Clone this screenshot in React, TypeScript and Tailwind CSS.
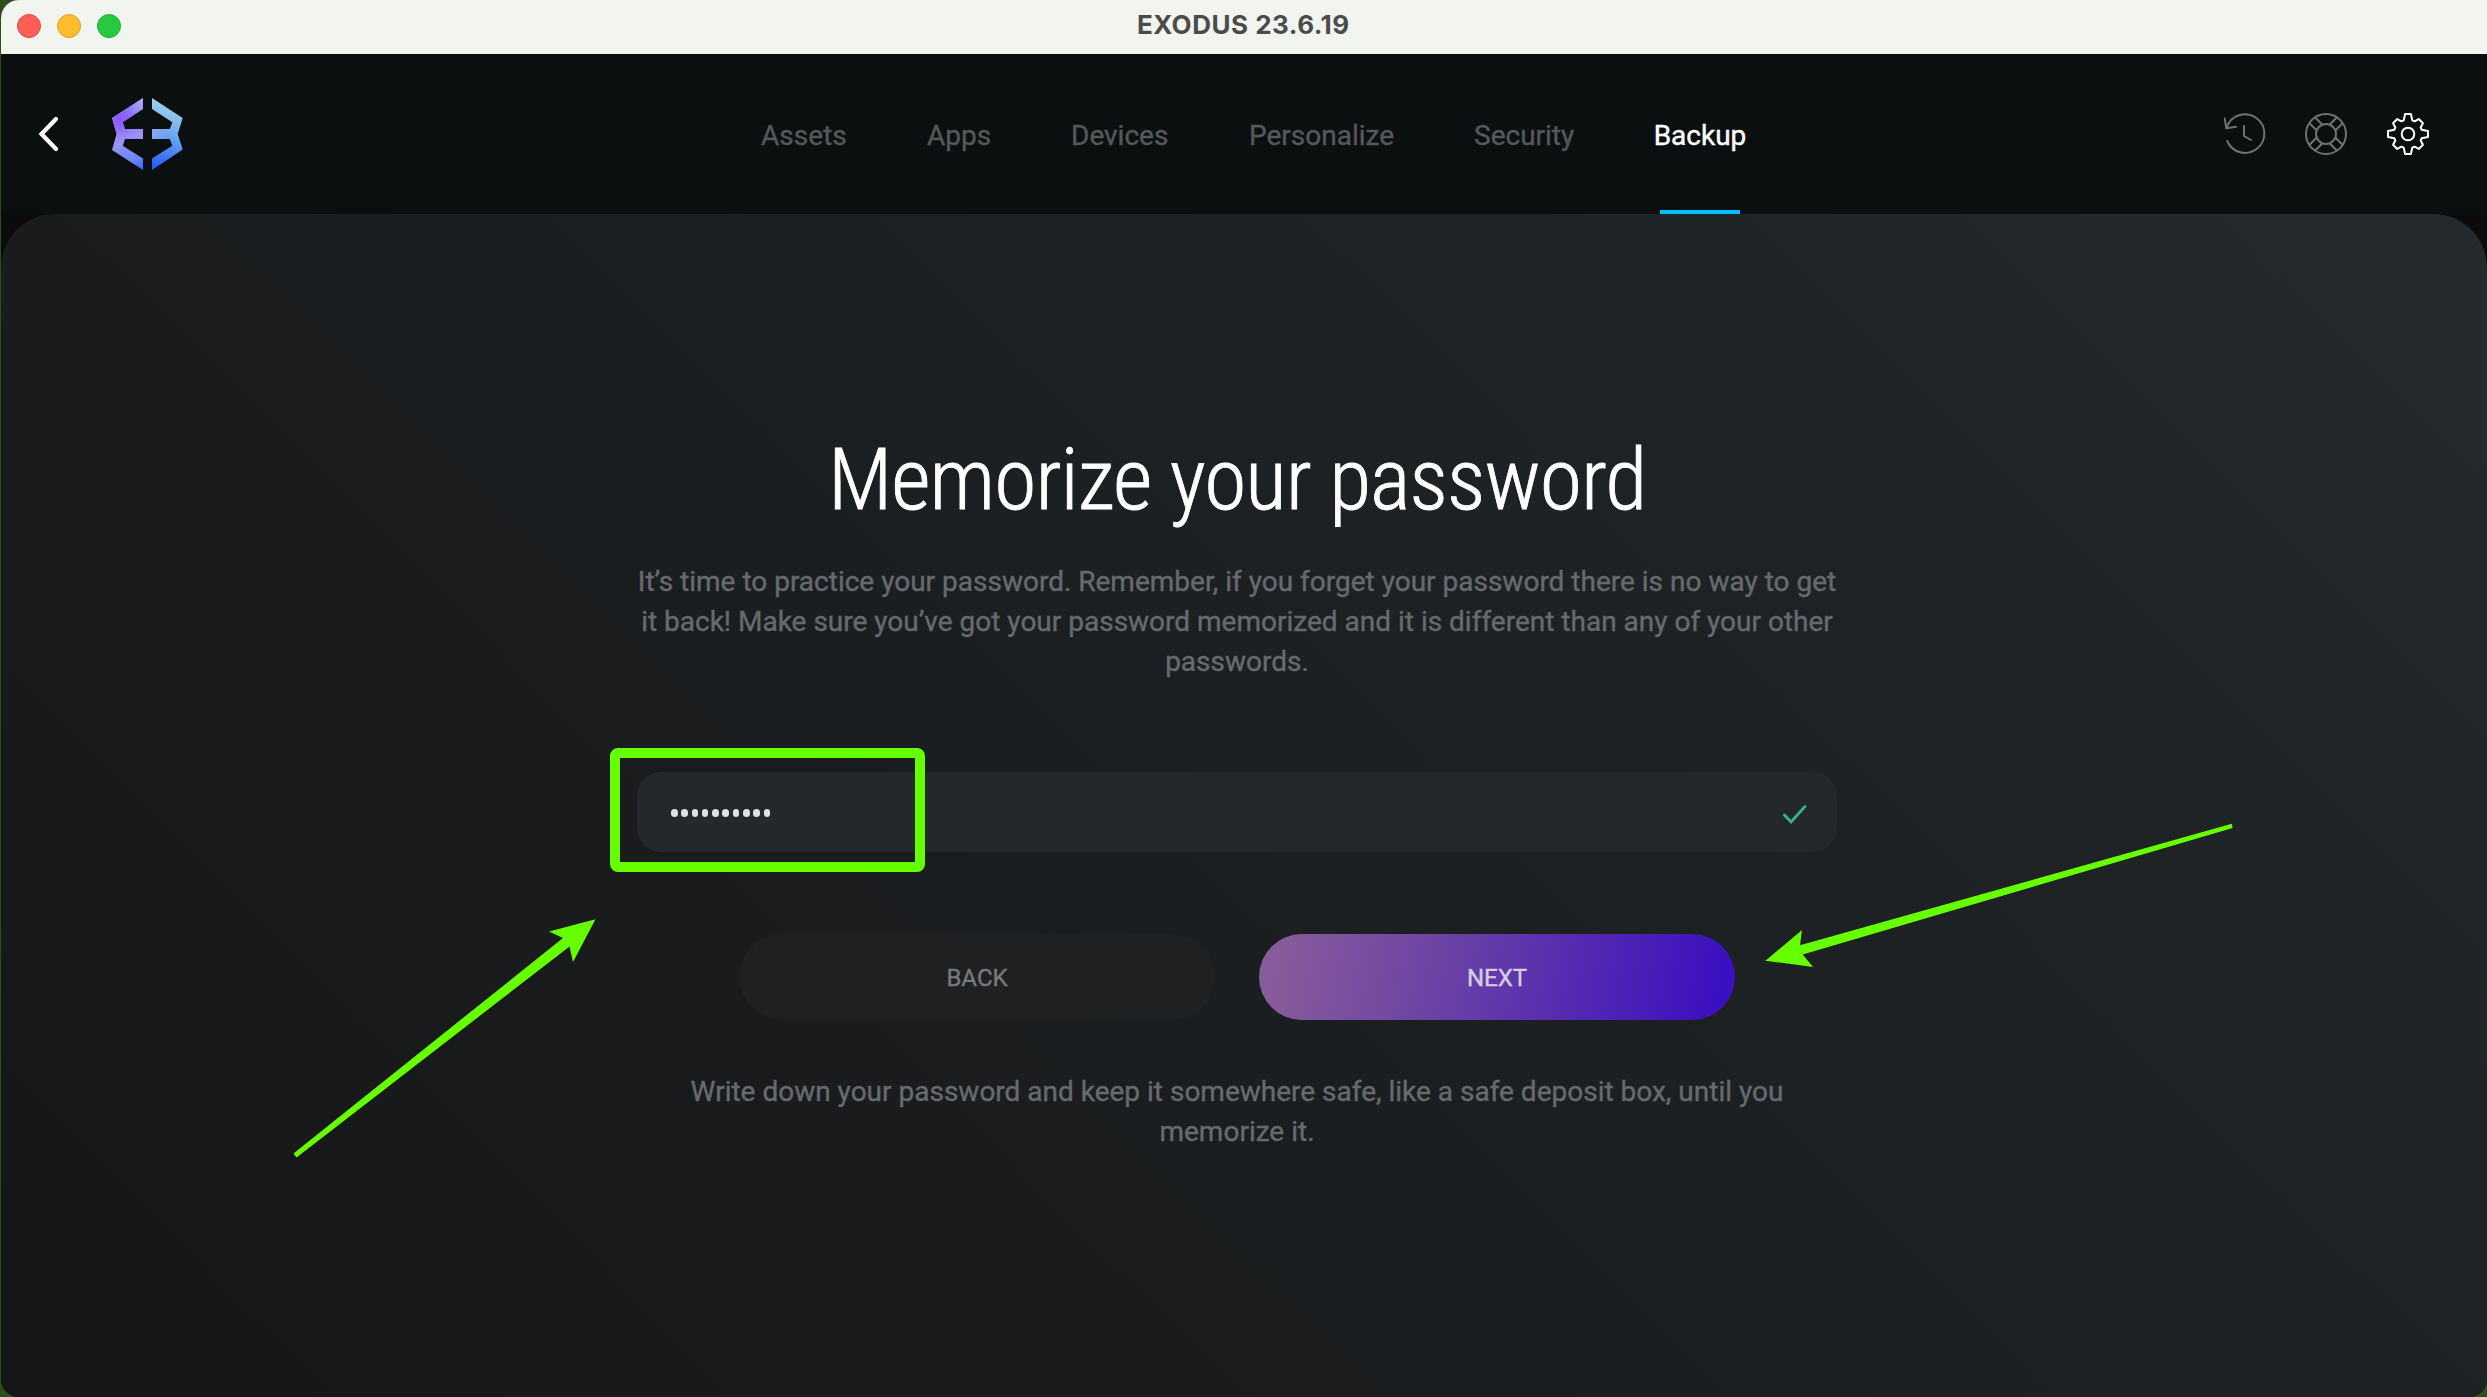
import React from "react";

const tabs = [
  { label: "Assets", cls: "w-[86px] mr-[80px]" },
  { label: "Apps", cls: "w-[64px] mr-[80px]" },
  { label: "Devices", cls: "w-[98px] mr-[80px]" },
  { label: "Personalize", cls: "w-[145px] mr-[80px]" },
  { label: "Security", cls: "w-[101px] mr-[79px]" },
];

function Logo() {
  return (
    <svg className="ml-[51px] h-[74px] w-[72px]" viewBox="111 97 72 74" fill="none">
      <defs>
        <linearGradient id="lb" x1="175" y1="98" x2="152" y2="170" gradientUnits="userSpaceOnUse">
          <stop offset="0" stopColor="#a6d8e6" />
          <stop offset="0.15" stopColor="#98cbea" />
          <stop offset="0.5" stopColor="#6aa4f0" />
          <stop offset="0.8" stopColor="#3d75f8" />
          <stop offset="1" stopColor="#1f55fb" />
        </linearGradient>
        <linearGradient id="lg" x1="122" y1="110" x2="148" y2="172" gradientUnits="userSpaceOnUse">
          <stop offset="0" stopColor="#9279fb" />
          <stop offset="0.45" stopColor="#9490f5" />
          <stop offset="0.75" stopColor="#6a87f8" />
          <stop offset="1" stopColor="#1f55fb" />
        </linearGradient>
        <radialGradient id="lv" cx="120" cy="119" r="32" gradientUnits="userSpaceOnUse">
          <stop offset="0" stopColor="#8a5cff" />
          <stop offset="0.25" stopColor="#8d66ff" />
          <stop offset="1" stopColor="#a9b0ee" stopOpacity="0" />
        </radialGradient>
        <radialGradient id="lt" cx="146" cy="97" r="20" gradientUnits="userSpaceOnUse">
          <stop offset="0" stopColor="#b3bbee" />
          <stop offset="1" stopColor="#b3b0f2" stopOpacity="0" />
        </radialGradient>
        <radialGradient id="lm" cx="150" cy="134" r="20" gradientUnits="userSpaceOnUse">
          <stop offset="0" stopColor="#8ea6f4" />
          <stop offset="1" stopColor="#8ea6f4" stopOpacity="0" />
        </radialGradient>
      </defs>
      {["url(#lg)", "url(#lv)", "url(#lt)"].map((f) => (
        <path key={f} fill={f} d="M143 98V109L122.7 122.3L125 129H143V139H125L122.7 145.7L143 158.5V170L112 150L116.6 134L112 118Z" />
      ))}
      {["url(#lb)", "url(#lm)"].map((f) => (
        <path key={f} fill={f} d="M152 98V109L172.3 122.3L169.8 129H152V139H169.8L172.3 145.7L152 158.5V170L182.7 149.5L177.7 134L182.7 118Z" />
      ))}
    </svg>
  );
}

function HistoryIcon() {
  return (
    <svg className="h-[42px] w-[42px]" viewBox="2224 114 42 42" fill="none" stroke="#707272" strokeWidth="2" strokeLinecap="round" strokeLinejoin="round">
      <path d="M2226.7 128.5A19.3 19.3 0 1 1 2227.2 142" />
      <path d="M2224.7 119.5L2226.3 129.3L2236 127.7" />
      <path d="M2244 127V137L2251 141" />
    </svg>
  );
}

function HelpIcon() {
  return (
    <svg className="h-[42px] w-[42px]" viewBox="-21 -21 42 42" fill="none" stroke="#707272" strokeWidth="2">
      <circle r="20" />
      <circle r="10" />
      {["rotate(45)", "rotate(135)", "rotate(225)", "rotate(315)"].map((r) => (
        <path key={r} transform={r} d="M9.4 -4H19.6M9.4 4H19.6" />
      ))}
    </svg>
  );
}

function GearIcon() {
  const parts: string[] = [];
  const pt = (x: number, y: number, deg: number) => {
    const a = (deg * Math.PI) / 180;
    return `${(x * Math.cos(a) - y * Math.sin(a)).toFixed(2)} ${(x * Math.sin(a) + y * Math.cos(a)).toFixed(2)}`;
  };
  for (let i = 0; i < 8; i++) {
    const c = i * 45;
    const top = i % 2 ? -18.2 : -20;
    parts.push(`${i ? "L" : "M"}${pt(-4.3, -13.6, c)}L${pt(-2.9, top, c)}L${pt(2.9, top, c)}L${pt(4.3, -13.6, c)}`);
  }
  return (
    <svg className="h-[44px] w-[44px]" viewBox="-22 -22 44 44" fill="none" stroke="#fff" strokeWidth="2" strokeLinejoin="round">
      <path d={parts.join("") + "Z"} />
      <circle r="6.3" />
    </svg>
  );
}

export default function App() {
  return (
    <div className="relative h-[1397px] w-[2487px] overflow-hidden bg-[#2a4f1b] pl-px font-['Roboto',sans-serif]">
      <div className="flex h-full flex-col overflow-hidden rounded-l-[18px] rounded-br-[18px] bg-[#0b0b0b]">
        <div className="flex h-[54px] shrink-0 items-center bg-[#f2f4ef] pl-4">
          <div className="flex w-[104px] -translate-y-px gap-4">
            <i className="size-6 rounded-full border border-[#e0483f] bg-[#ff5f57]" />
            <i className="size-6 rounded-full border border-[#dfa023] bg-[#febc2e]" />
            <i className="size-6 rounded-full border border-[#1dad2b] bg-[#28c840]" />
          </div>
          <div className="ml-[1016px] -translate-y-[3px] whitespace-nowrap font-['Inter',sans-serif] text-[26px] font-bold tracking-[0.5px] text-[#4b4c4a]">EXODUS 23.6.19</div>
        </div>

        <header className="flex h-[160px] shrink-0 items-center bg-[#0b0f10] pl-[37px]">
          <svg className="h-[36px] w-[22px]" viewBox="0 0 22 36" fill="none" stroke="#fff" strokeWidth="4.2" strokeLinecap="round">
            <path d="M18 3L3.5 18L18 33" />
          </svg>
          <Logo />
          <nav className="ml-[578px] flex h-full items-center whitespace-nowrap text-[28px] text-[#555758] [-webkit-text-stroke:0.4px] [&>a]:pt-[3px]">
            {tabs.map((t) => (
              <a key={t.label} className={t.cls}>{t.label}</a>
            ))}
            <a className="relative flex h-full w-[92px] items-center justify-center text-white">
              Backup
              <i className="absolute bottom-0 left-1/2 h-1 w-20 -translate-x-1/2 bg-[#00bfff]" />
            </a>
          </nav>
          <div className="ml-[478px] flex items-center gap-[39px]">
            <HistoryIcon />
            <HelpIcon />
            <GearIcon />
          </div>
        </header>

        <main className="flex flex-1 flex-col items-center rounded-t-[54px] bg-[linear-gradient(45deg,#141618_0%,#17191b_19%,#1a1c1e_35%,#1c2022_54%,#1f2326_74%,#23282c_91%,#24292d_100%)] pr-[14px] pt-[216px]">
          <h1 className="whitespace-nowrap text-[86px] font-light leading-[100px] tracking-[-0.98px] text-white [-webkit-text-stroke:0.8px] [font-stretch:75%]">Memorize your password</h1>
          <p className="mt-8 whitespace-nowrap text-center text-[28px] leading-[40px] text-[#666a6e] [-webkit-text-stroke:0.4px]">
            It’s time to practice your password. Remember, if you forget your password there is no way to get
            <br />
            it back! Make sure you’ve got your password memorized and it is different than any of your other
            <br />
            passwords.
          </p>
          <div className="relative mt-[90px] flex h-20 w-[1200px] items-center justify-between rounded-3xl bg-[#24272b] pl-[34px] pr-[30px]">
            <div className="flex translate-y-px gap-[3.7px]">
              {Array.from({ length: 10 }, (_, i) => (
                <i key={i} className="h-[7.6px] w-[6.6px] rounded-full bg-[#dfe1e6]" />
              ))}
            </div>
            <svg className="h-5 w-6 translate-y-[2px]" viewBox="0 0 24 20" fill="none" stroke="#34b58b" strokeWidth="2.8" strokeLinecap="round">
              <path d="M1.5 11L8 18L22 2.5" />
            </svg>
            <div className="absolute -left-[27px] -top-6 h-[124px] w-[315px] rounded-lg border-[10px] border-[#66ff00]" />
          </div>
          <div className="mt-[82px] flex gap-[44px] text-[24px] [-webkit-text-stroke:0.4px] [&>button]:h-[86px] [&>button]:w-[476px] [&>button]:rounded-full [&>button]:pt-[2px]">
            <button className="bg-[#1f2022] text-[#77797a]">BACK</button>
            <button className="bg-[linear-gradient(100deg,#885b9b_5%,#6840a6_42%,#3b10c0_96%)] text-[#d5ccdd]">NEXT</button>
          </div>
          <p className="mt-[52px] text-center text-[28px] leading-[40px] text-[#666a6e] [-webkit-text-stroke:0.4px]">
            Write down your password and keep it somewhere safe, like a safe deposit box, until you
            <br />
            memorize it.
          </p>
        </main>
      </div>

      <svg className="pointer-events-none absolute inset-0 h-full w-full" viewBox="0 0 2487 1397" fill="#66ff00">
        <path d="M293.5 1153.5L563 938L549 931.5L595.5 919.3L573 962L569.5 946.5L296.5 1157.5Z" />
        <path d="M2231.8 823.7L1800 945.3L1802 930L1765.4 960.7L1813 967L1802.7 954.5L2232.6 828Z" />
      </svg>
    </div>
  );
}
